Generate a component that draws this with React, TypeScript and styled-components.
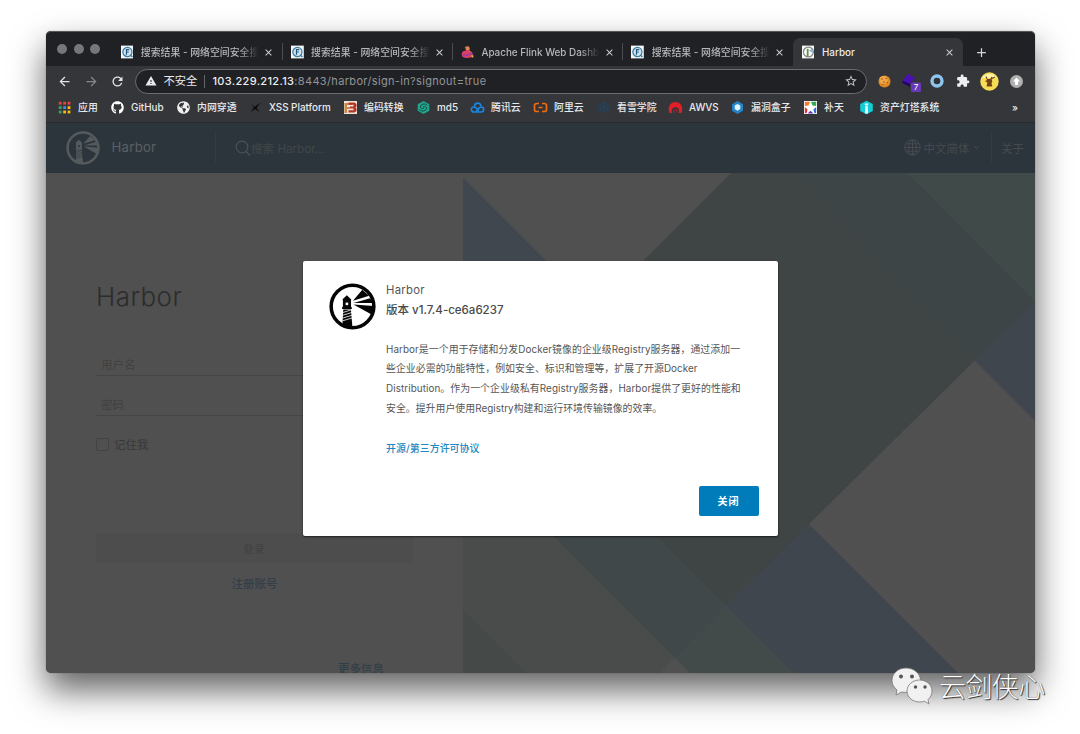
import React from "react";
import styled, { createGlobalStyle } from "styled-components";
import { FaGithub, FaGlobeAmericas } from "react-icons/fa";
import { MdRefresh, MdArrowBack, MdArrowForward, MdStarBorder, MdWarning, MdClose, MdAdd, MdExtension } from "react-icons/md";

const ui = `Inter, "Noto Sans CJK SC", sans-serif`;

const GlobalStyle = createGlobalStyle`
  * { box-sizing: border-box; }
  html, body { margin: 0; background: #fff; }
  body { width: 1080px; height: 734px; overflow: hidden; font-family: ${ui}; }
`;

const Stage = styled.div`
  position: relative;
  width: 1080px;
  height: 734px;
  padding: 31px 45px 61px 46px;
  overflow: hidden;
`;
const Window = styled.div`
  position: relative;
  width: 989px;
  height: 642px;
  display: flex;
  flex-direction: column;
  border-radius: 5px;
  background: #505050;
  box-shadow: 0 0 1px 0 rgba(0, 0, 0, 0.6), 0 17px 34px rgba(0, 0, 0, 0.62);
`;

/* ---------- browser chrome ---------- */
const TabStrip = styled.div`
  height: 35px;
  display: flex;
  align-items: flex-end;
  background: #202124;
  border-top: 1px solid #55595a;
  border-radius: 5px 5px 0 0;
`;
const Lights = styled.div`
  width: 66px;
  height: 34px;
  padding: 0 0 0 11px;
  display: flex;
  align-items: center;
  gap: 6.5px;
`;
const Light = styled.i`
  width: 10px;
  height: 10px;
  border-radius: 50%;
  background: #76777a;
`;
const Tab = styled.div<{ $active?: boolean }>`
  width: 170.3px;
  height: 28px;
  padding: 0 8px 0 8.5px;
  display: flex;
  align-items: center;
  color: ${(p) => (p.$active ? "#e8eaed" : "#b4b7bb")};
  background: ${(p) => (p.$active ? "#35363a" : "transparent")};
  border-radius: 7px 7px 0 0;
`;
const TabTitle = styled.span<{ $fade?: boolean }>`
  width: 120.5px;
  margin-left: 7.5px;
  flex: none;
  white-space: nowrap;
  font-size: 9.9px;
  font-weight: 500;
  line-height: 16px;
  mask-image: ${(p) => (p.$fade ? "linear-gradient(90deg,#000 82%,transparent 98%)" : "none")};
`;
const TabClose = styled.span`
  width: 11px;
  display: flex;
  color: #d0d2d5;
  margin-left: 2px;
`;
const TabDivider = styled.i`
  width: 1px;
  height: 17px;
  margin: 0 -0.5px 6px;
  background: #4a4c50;
`;
const NewTab = styled.span`
  display: flex;
  margin: 0 0 6px 11px;
  color: #d5d7da;
`;
const Toolbar = styled.div`
  height: 30px;
  display: flex;
  align-items: center;
  background: #35363a;
  padding-left: 11px;
`;
const NavIcon = styled.span<{ $dim?: boolean }>`
  width: 26.5px;
  display: flex;
  color: ${(p) => (p.$dim ? "#85878a" : "#e4e5e7")};
`;
const Omnibox = styled.div`
  width: 732px;
  height: 25px;
  margin-left: -2px;
  padding: 0 8px 0 9px;
  display: flex;
  align-items: center;
  border: 1.5px solid #6b6d70;
  border-radius: 13px;
  background: #202124;
  color: #e8eaed;
  font-size: 11px;
  white-space: nowrap;
`;
const Insecure = styled.span`
  margin-left: 7px;
  padding-right: 7px;
  line-height: 13px;
  font-size: 11.3px;
  border-right: 1px solid #63656a;
`;
const Url = styled.span`
  margin-left: 7px;
  flex: 1;
  letter-spacing: 0.34px;
  color: #929599;
  b { color: #eceef0; font-weight: 500; }
`;
const Extensions = styled.div`
  display: flex;
  align-items: center;
  margin-left: 4.5px;
`;
const Extension = styled.span`
  width: 26.4px;
  height: 22px;
  flex: none;
  display: flex;
  align-items: center;
  justify-content: center;
  color: #eceef0;
`;
const BookmarkBar = styled.div`
  height: 27px;
  padding: 0 0 4px 12px;
  display: flex;
  align-items: center;
  background: #35363a;
  border-bottom: 1px solid #292b2d;
`;
const Bookmark = styled.div<{ $width: number; $spacing?: number }>`
  width: ${(p) => p.$width}px;
  flex: none;
  display: flex;
  align-items: center;
  gap: 7px;
  color: #e8eaed;
  font-size: 9.9px;
  font-weight: 500;
  line-height: 14px;
  white-space: nowrap;
  letter-spacing: ${(p) => p.$spacing ?? 0}px;
  svg { width: 13px; height: 13px; flex: none; overflow: visible; }
`;

/* ---------- Harbor page ---------- */
const Header = styled.header`
  height: 50px;
  display: flex;
  align-items: center;
  background: #2d353c;
  padding: 0 11px 1px 20px;
  color: #4e5357;
`;
const Brand = styled.span`
  width: 103.5px;
  margin-left: 11.5px;
  padding-bottom: 1px;
  font-size: 13.2px;
  letter-spacing: 0.25px;
  color: #5b6063;
`;
const Rule = styled.i`
  width: 1px;
  height: 31px;
  background: #333b41;
`;
const Search = styled.div`
  flex: 1;
  display: flex;
  align-items: center;
  margin-left: 19px;
  font-size: 11.6px;
  color: #414749;
`;
const Lang = styled.div`
  display: flex;
  align-items: center;
  gap: 3px;
  margin-right: 11px;
  font-size: 11.5px;
  color: #454b4f;
`;
const About = styled.span`
  margin-left: 9.5px;
  font-size: 11.5px;
  color: #454b4f;
`;
const Body = styled.main`
  height: 500px;
  display: flex;
  overflow: hidden;
  border-radius: 0 0 5px 5px;
`;
const Login = styled.section`
  width: 417px;
  padding: 108px 50px 0 50px;
  display: flex;
  flex-direction: column;
  flex: none;
`;
const Title = styled.h1`
  margin: 0;
  height: 32px;
  line-height: 32px;
  font-size: 26px;
  font-weight: 300;
  letter-spacing: 0.45px;
  color: #2c2c2c;
`;
const Field = styled.div<{ $top: number }>`
  width: 317px;
  height: 22px;
  margin-top: ${(p) => p.$top}px;
  padding-left: 5px;
  line-height: 23px;
  font-size: 11.5px;
  color: #404040;
  border-bottom: 1px solid #454545;
`;
const Remember = styled.div`
  display: flex;
  align-items: center;
  gap: 5px;
  height: 18px;
  margin-top: 20px;
  font-size: 11.5px;
  color: #383838;
`;
const Checkbox = styled.i`
  width: 13px;
  height: 13px;
  border: 1px solid #434343;
  border-radius: 2px;
`;
const LoginButton = styled.div`
  width: 317px;
  height: 30px;
  margin-top: 81px;
  border-radius: 2px;
  line-height: 32px;
  text-align: center;
  font-size: 10px;
  font-weight: 500;
  letter-spacing: 1px;
  color: #434343;
  background: #4d4d4d;
`;
const SignUp = styled.a`
  margin-top: 13px;
  line-height: 16px;
  text-align: center;
  font-size: 11.5px;
  font-weight: 500;
  color: #303f4a;
`;
const MoreInfo = styled(SignUp)`
  margin: 69px 29px 0 0;
  text-align: right;
`;
const Art = styled.svg`
  display: block;
  width: 572px;
  height: 500px;
`;

/* ---------- about dialog ---------- */
const Dialog = styled.div`
  position: absolute;
  left: 257px;
  top: 229.5px;
  width: 475px;
  height: 275px;
  padding: 19px 19.5px 19.5px 26px;
  display: flex;
  flex-direction: column;
  background: #fff;
  border-radius: 2px;
  box-shadow: 0 1px 2px 0 rgba(0, 0, 0, 0.6);
  color: #555;
`;
const DialogMain = styled.div`
  flex: 1;
  display: flex;
  gap: 10px;
`;
const LogoSlot = styled.div`
  width: 47px;
  padding-top: 3px;
`;
const Copy = styled.div`
  white-space: nowrap;
`;
const Product = styled.div`
  font-size: 11.3px;
  line-height: 20px;
  letter-spacing: 0.3px;
`;
const Version = styled(Product)`
  font-size: 11.5px;
  font-weight: 500;
  letter-spacing: 0;
  color: #484848;
`;
const Paragraph = styled.div`
  margin: 20px 0 19.5px;
`;
const Line = styled.div<{ $spacing?: number }>`
  height: 19.8px;
  line-height: 19.8px;
  font-size: 9.9px;
  letter-spacing: ${(p) => p.$spacing ?? 0}px;
`;
const License = styled.a`
  display: block;
  font-size: 9.9px;
  font-weight: 500;
  line-height: 20px;
  letter-spacing: 0.1px;
  color: #2087c2;
`;
const CloseButton = styled.button`
  align-self: flex-end;
  width: 60px;
  height: 30px;
  padding: 0;
  border: 0;
  border-radius: 2px;
  background: #007cbb;
  color: #fff;
  font: 600 10px/30px ${ui};
  letter-spacing: 1px;
`;
const Watermark = styled.div`
  position: absolute;
  left: 891px;
  top: 666px;
  display: flex;
  align-items: center;
  gap: 6px;
  font: 300 27px/40px "Noto Sans CJK SC", sans-serif;
  letter-spacing: -0.6px;
  color: #fff;
  text-shadow: 1px 1px 1px #333, 0 0 1px #555;
`;

const HarborLogo = ({ size, ink, paper }: { size: number; ink: string; paper: string }) => (
  <svg width={size} height={size} viewBox="0 0 48 48">
    <circle cx="24" cy="24" r="21.8" fill={paper} stroke={ink} strokeWidth="3.6" />
    <path d="M24.5 18 34 7 41 13Z M25 20.4 42 15.5 45 20.5Z M25 22 45.5 23.5 43 32Z" fill={ink} />
    <path d="M18.2 12.5 23 17H13.4Z M14.2 17H22.5V25.5H14.2Z M13.4 24.6H23.2V26.6H13.4Z" fill={ink} />
    <path d="M17 20h2.6v2.6h-2.6z" fill={paper} />
    <path d="M14.600 27H22.4L24 46 13.6 44Z" fill={ink} />
    <path d="M14 30.2 23.5 27.2M14 33 23.5 30M14 35.8 24 32.8M14 38.6 24 35.6" stroke={paper} strokeWidth=".8" />
  </svg>
);

const FofaIcon = () => (
  <svg width="14" height="14" viewBox="0 0 14 14">
    <path d="M0 0h14v14H0z" fill="#f4f6f8" />
    <circle cx="7" cy="7" r="5" fill="#cfe3ef" stroke="#3d7ea3" strokeWidth="1.4" />
    <path d="M6 10V4.4h3M6 7h2.5" fill="none" stroke="#23577f" strokeWidth="1.3" />
    <path d="M10 10l2.5 2.5" stroke="#3d7ea3" strokeWidth="1.6" />
  </svg>
);
const FlinkIcon = () => (
  <svg width="14" height="14" viewBox="0 0 14 14">
    <path d="M.8 9.500C.5 6.500 3 5.300 5 5.600L6 4 9 4.500l1 2c2 0 3 1.500 2.800 3.500l-1 2.500C9 13.500 5 13.800 3 13 1.500 12.500.8 11 .8 9.500Z" fill="#d8406b" />
    <path d="M5.500 4.800C4.300 3 5.500.5 7.500.6 9.500.8 10 3.500 9 5Z" fill="#d98a4f" />
    <path d="M4.500 2.500 6 1M9 6l1.500 1" stroke="#e8606a" strokeWidth="1.2" />
    <path d="M2 11c2-2 4 1 6-1s3-1 5 0" stroke="#8a3ca0" strokeWidth="1.2" fill="none" />
    <path d="M11.500 10.500h2v2.500h-2z" fill="#f2b33d" />
  </svg>
);
const HarborFavicon = () => (
  <svg width="14" height="14" viewBox="0 0 14 14">
    <path d="M0 0h14v14H0z" fill="#f6f6f4" />
    <circle cx="7" cy="7" r="5.4" fill="#fff" stroke="#7f8881" strokeWidth="1.4" />
    <path d="M5.200 3.500h2V12h-2z" fill="#648b49" />
    <path d="M7.500 5.500 11.500 2.800 12 8Z" fill="#8fb6d2" />
  </svg>
);

const glyphs: Record<string, React.ReactNode> = {
  apps: (
    <svg viewBox="0 0 13 13">
      {["#ea4335", "#ea4335", "#ea4335", "#34a853", "#4285f4", "#fbbc05", "#34a853", "#fbbc05", "#fbbc05"].map((c, i) => (
        <rect key={i} x={0.8 + (i % 3) * 4.4} y={0.8 + Math.floor(i / 3) * 4.4} width="2.8" height="2.8" fill={c} />
      ))}
    </svg>
  ),
  github: <FaGithub color="#fff" />,
  globe: <FaGlobeAmericas color="#f1f1f1" />,
  x: <svg viewBox="0 0 13 13"><path d="M2 2.500 5.500 6 11.500 1.500 7.500 7 10.500 11 6 8 1.500 11 4.800 6.800Z" fill="#08090a" /></svg>,
  bianma: (
    <svg viewBox="0 0 13 13">
      <path d="M0 0h13v13H0z" fill="#efe3d6" />
      <path d="M.5 2H8v2H3v2h3v2H3v4H.5z" fill="#c98a45" />
      <path d="M4.500 1.500h6L12.500 3v2.500l-1 1 1 1V10l-2 1.500h-6V9.200h5V7.500H6v-2h3.500V3.800h-5z" fill="#b5352b" />
    </svg>
  ),
  md5: (
    <svg viewBox="0 0 13 13">
      <path d="M6.500 0 12.300 3.200V9.800L6.500 13 .7 9.800V3.200Z" fill="#1ea58c" />
      <path d="M10.500 4.500C8 1.500 3 3.500 3.500 6s3.500 1 3.500 1M2.500 8.500c2.500 3 7.500 1 7-1.500S6 6 6 6" fill="none" stroke="#22483f" strokeWidth="1" />
    </svg>
  ),
  tencent: (
    <svg viewBox="0 0 13 13">
      <path d="M3.500 11C-.8 11-.4 5.800 3 6c2 0 3 2 5 3.500M3.500 11H10c3.600 0 3.600-5 0-5-2 0-3 2.500-5 5M3.400 5.500c.5-4.500 6-4.500 6.600-.3" fill="none" stroke="#1788e5" strokeWidth="1.6" />
    </svg>
  ),
  ali: (
    <svg viewBox="0 0 13 13">
      <path d="M5 2.500H3C1 2.500.5 3.300.5 4.300v4.400c0 1 .5 1.800 2.500 1.800h2M8 2.500h2c2 0 2.500.8 2.500 1.800v4.400c0 1-.5 1.800-2.500 1.800H8M4.500 6.500h4" fill="none" stroke="#f26a0a" strokeWidth="1.7" />
    </svg>
  ),
  snow: (
    <svg viewBox="0 0 13 13">
      <path d="M6.500.5v12M1.300 3.500l10.400 6M11.700 3.500l-10.400 6M4.500 1.500l2 2 2-2M4.500 11.500l2-2 2 2M1 6l2.500-.8L3 2.500M12 6l-2.500-.8.5-2.700M1 7l2.500.8L3 10.500M12 7l-2.500.8.5 2.700" fill="none" stroke="#1d4568" strokeWidth=".9" />
    </svg>
  ),
  awvs: (
    <svg viewBox="0 0 13 13">
      <path d="M.5 12C-2 5 2 1 6.500 1S15 5 12.500 12H9.800C11 8 9 6.200 6.500 6.200S2 8 3.200 12Z" fill="#e21f26" />
      <path d="M4.800 11.500c-.8-3.800 4.200-3.800 3.400 0" fill="none" stroke="#b01b21" strokeWidth="1.2" />
    </svg>
  ),
  box: (
    <svg viewBox="0 0 13 13">
      <path d="M6.500 0 12 3.200V9.800L6.500 13 1 9.800V3.200Z" fill="#2584c8" />
      <path d="M6.500 3 9.300 4.600V8L6.500 9.700 3.700 8V4.600Z" fill="#e2f3fc" />
    </svg>
  ),
  butian: (
    <svg viewBox="0 0 13 13">
      <path d="M0 0h13v13H0z" fill="#fff" />
      <path d="M.8.8H6L4.500 4.500.8 5Z" fill="#ef7b2c" /><path d="M7 .8h5.200V5L8.500 4.500Z" fill="#35a853" />
      <path d="M.8 6l2.800 2.500L2.500 12.200H.8z" fill="#e02f2f" /><path d="M12.200 6 9.400 8.500l1.100 3.700h1.700z" fill="#2d6fd0" />
      <path d="M6.500 9.800l3 2.600h-6z" fill="#6a35b5" />
      <path d="M6.500 2 8 5.200l3.500.3L8.800 7.800l.9 3.500-3.200-1.900-3.200 1.900.9-3.500L1.500 5.500 5 5.200Z" fill="#fff" />
    </svg>
  ),
  tower: (
    <svg viewBox="0 0 13 13">
      <path d="M6.500-.3 12.800 3V10L6.500 13.300.2 10V3Z" fill="#12cdd4" />
      <path d="M5.400 4.500h2.200l.5 8h-3.200zM4.800 2.500h3.400v1.500h-3.400z" fill="#eaffff" />
    </svg>
  ),
};

const bookmarks: { icon: string; label: string; width: number; spacing?: number }[] = [
  { icon: "apps", label: "应用", width: 53 },
  { icon: "github", label: "GitHub", width: 66 },
  { icon: "globe", label: "内网穿透", width: 72 },
  { icon: "x", label: "XSS Platform", width: 95, spacing: -0.02 },
  { icon: "bianma", label: "编码转换", width: 73 },
  { icon: "md5", label: "md5", width: 54 },
  { icon: "tencent", label: "腾讯云", width: 63 },
  { icon: "ali", label: "阿里云", width: 63 },
  { icon: "snow", label: "看雪学院", width: 72 },
  { icon: "awvs", label: "AWVS", width: 62 },
  { icon: "box", label: "漏洞盒子", width: 73 },
  { icon: "butian", label: "补天", width: 56 },
  { icon: "tower", label: "资产灯塔系统", width: 152 },
];

const tabs = [
  { icon: <FofaIcon />, title: "搜索结果 - 网络空间安全搜" },
  { icon: <FofaIcon />, title: "搜索结果 - 网络空间安全搜" },
  { icon: <FlinkIcon />, title: "Apache Flink Web Dashb" },
  { icon: <FofaIcon />, title: "搜索结果 - 网络空间安全搜" },
];

export default function App() {
  return (
    <Stage>
      <GlobalStyle />
      <Window>
        <TabStrip>
          <Lights><Light /><Light /><Light /></Lights>
          {tabs.map((t, i) => (
            <React.Fragment key={i}>
              {i > 0 && <TabDivider />}
              <Tab>
                {t.icon}
                <TabTitle $fade>{t.title}</TabTitle>
                <TabClose><MdClose size={11} /></TabClose>
              </Tab>
            </React.Fragment>
          ))}
          <Tab $active>
            <HarborFavicon />
            <TabTitle>Harbor</TabTitle>
            <TabClose><MdClose size={11} /></TabClose>
          </Tab>
          <NewTab><MdAdd size={15} /></NewTab>
        </TabStrip>
        <Toolbar>
          <NavIcon><MdArrowBack size={15} /></NavIcon>
          <NavIcon $dim><MdArrowForward size={15} /></NavIcon>
          <NavIcon><MdRefresh size={15} /></NavIcon>
          <Omnibox>
            <MdWarning size={12} />
            <Insecure>不安全</Insecure>
            <Url><b>103.229.212.13</b>:8443/harbor/sign-in?signout=true</Url>
            <MdStarBorder size={14} color="#c3c5c8" />
          </Omnibox>
          <Extensions>
            <Extension>
              <svg width="13" height="13" viewBox="0 0 13 13">
                <circle cx="6.5" cy="6.5" r="6" fill="#e08a25" />
                <circle cx="5.5" cy="5" r="4" fill="#f0a847" />
                <path d="M3 4h2M7.500 3.500h1.500M5 7h2M8.500 7.500h1.500M4 9.500h1.500" stroke="#a35a1a" strokeWidth="1.2" />
              </svg>
            </Extension>
            <Extension>
              <svg width="20" height="22" viewBox="0 0 20 22">
                <path d="M7 4 14 8 9 14 1.500 10.500Z" fill="#4a0fb5" />
                <path d="M1.500 10.500 9 14V17L1.500 13Z" fill="#260070" />
                <rect x="10" y="12.5" width="10" height="9.5" rx="1.5" fill="#673ab7" />
                <text x="15" y="20.2" textAnchor="middle" fontFamily="Inter" fontSize="8" fill="#fff">7</text>
              </svg>
            </Extension>
            <Extension>
              <svg width="14" height="14" viewBox="0 0 14 14">
                <circle cx="7" cy="7" r="5" fill="#303236" stroke="#8ec5ef" strokeWidth="3.4" />
              </svg>
            </Extension>
            <Extension><MdExtension size={14} /></Extension>
            <Extension>
              <svg width="19" height="19" viewBox="0 0 19 19">
                <circle cx="9.5" cy="9.5" r="9.2" fill="#f8dc55" />
                <path d="M2 6a9 9 0 0 1 15 0Z" fill="#fdf3ab" />
                <path d="M7 7h4.500l.8 2.500-.8 1.500.8 3.500H6.500l.8-3.500-.8-1.500Z" fill="#71411a" />
                <path d="M5.500 9.500 15 5M7 7 6 4.500M11 7l.8-2" stroke="#71411a" strokeWidth="1.1" />
              </svg>
            </Extension>
            <Extension>
              <svg width="13" height="13" viewBox="0 0 13 13">
                <circle cx="6.5" cy="6.5" r="6.5" fill="#b0b0b0" />
                <path d="M6.500 2.500 10 6.500H8V10H5V6.500H3Z" fill="#fff" />
              </svg>
            </Extension>
          </Extensions>
        </Toolbar>
        <BookmarkBar>
          {bookmarks.map((b) => (
            <Bookmark key={b.label} $width={b.width} $spacing={b.spacing}>
              {glyphs[b.icon]}
              {b.label}
            </Bookmark>
          ))}
          <Bookmark $width={12}>»</Bookmark>
        </BookmarkBar>
        <Header>
          <HarborLogo size={34} ink="#555a5d" paper="#2d353c" />
          <Brand>Harbor</Brand>
          <Rule />
          <Search>
            <svg width="16" height="16" viewBox="0 0 16 16" fill="none" stroke="#4b5154" strokeWidth="1.2">
              <circle cx="7" cy="7" r="5.8" /><path d="m11 11.500 4 4" />
            </svg>
            搜索 Harbor...
          </Search>
          <Lang>
            <svg width="17" height="17" viewBox="0 0 17 17" fill="none" stroke="#454b4f" strokeWidth="1">
              <circle cx="8.5" cy="8.5" r="7.7" /><ellipse cx="8.5" cy="8.5" rx="3.8" ry="7.7" />
              <path d="M8.500.8v15.400M.8 8.500h15.400M2 4.800h13M2 12.200h13" />
            </svg>
            中文简体
            <svg width="7" height="5" viewBox="0 0 7 5" fill="none" stroke="#454b4f"><path d="m1 1 2.500 2.500L6 1" /></svg>
          </Lang>
          <Rule />
          <About>关于</About>
        </Header>
        <Body>
          <Login>
            <Title>Harbor</Title>
            <Field $top={41}>用户名</Field>
            <Field $top={18}>密码</Field>
            <Remember><Checkbox />记住我</Remember>
            <LoginButton>登录</LoginButton>
            <SignUp>注册账号</SignUp>
            <MoreInfo>更多信息</MoreInfo>
          </Login>
          <Art viewBox="463 173 572 500">
            <path d="M463 173H1035V673H463Z" fill="#505050" />
            <path d="M463 446 675 658 660 673H463Z" fill="#4a4c4c" />
            <path d="M463 610 526 673H463Z" fill="#454a48" />
            <path d="M463 177.500 600 314.500 463 452Z" fill="#40474e" />
            <path d="M731 173H1035V301L726 606 700 580 463 441Z" fill="#3f4445" />
            <path d="M463 446 675 658 726 606 600 480Z" fill="#404849" />
            <path d="M795 173H907L1035 302 976 361Z" fill="#3d4546" />
            <path d="M907 173H1035V302Z" fill="#3f4a49" />
            <path d="M1035 301V421L974 360Z" fill="#40464d" />
            <path d="M809 524 958 673H793L726 606Z" fill="#40464d" />
            <path d="M726 606 793 673H690L675 658Z" fill="#434b4a" />
          </Art>
        </Body>
        <Dialog>
          <DialogMain>
            <LogoSlot><HarborLogo size={47} ink="#050505" paper="#fff" /></LogoSlot>
            <Copy>
              <Product>Harbor</Product>
              <Version>版本 v1.7.4-ce6a6237</Version>
              <Paragraph>
                <Line $spacing={0.07}>Harbor是一个用于存储和分发Docker镜像的企业级Registry服务器，通过添加一</Line>
                <Line $spacing={0.05}>些企业必需的功能特性，例如安全、标识和管理等，扩展了开源Docker</Line>
                <Line $spacing={0.07}>Distribution。作为一个企业级私有Registry服务器，Harbor提供了更好的性能和</Line>
                <Line $spacing={0.03}>安全。提升用户使用Registry构建和运行环境传输镜像的效率。</Line>
              </Paragraph>
              <License>开源/第三方许可协议</License>
            </Copy>
          </DialogMain>
          <CloseButton>关闭</CloseButton>
        </Dialog>
      </Window>
      <Watermark>
        <svg width="42" height="38" viewBox="0 0 42 38">
          <g fill="#f1f1f1" stroke="#777" strokeWidth=".8">
            <path d="M15 1C7 1 1 6.500 1 13.500c0 4 2 7 5 9.500L5 28l5.500-3C20 27 29.500 21 29.500 13.500 29.500 6.500 23 1 15 1Z" />
            <path d="M28.500 13C21.500 13 16 18 16 24s5.500 11 12.500 11c2 0 3.500-.3 5-.8L38 37l-1-4.500c2.500-2 4-5 4-8.500 0-6-5.500-11-12.500-11Z" />
          </g>
          <g fill="#555">
            <circle cx="10" cy="9.5" r="2" /><circle cx="21" cy="9.5" r="2" />
            <circle cx="24.5" cy="20" r="1.7" /><circle cx="34" cy="20" r="1.7" />
          </g>
        </svg>
        云剑侠心
      </Watermark>
    </Stage>
  );
}
